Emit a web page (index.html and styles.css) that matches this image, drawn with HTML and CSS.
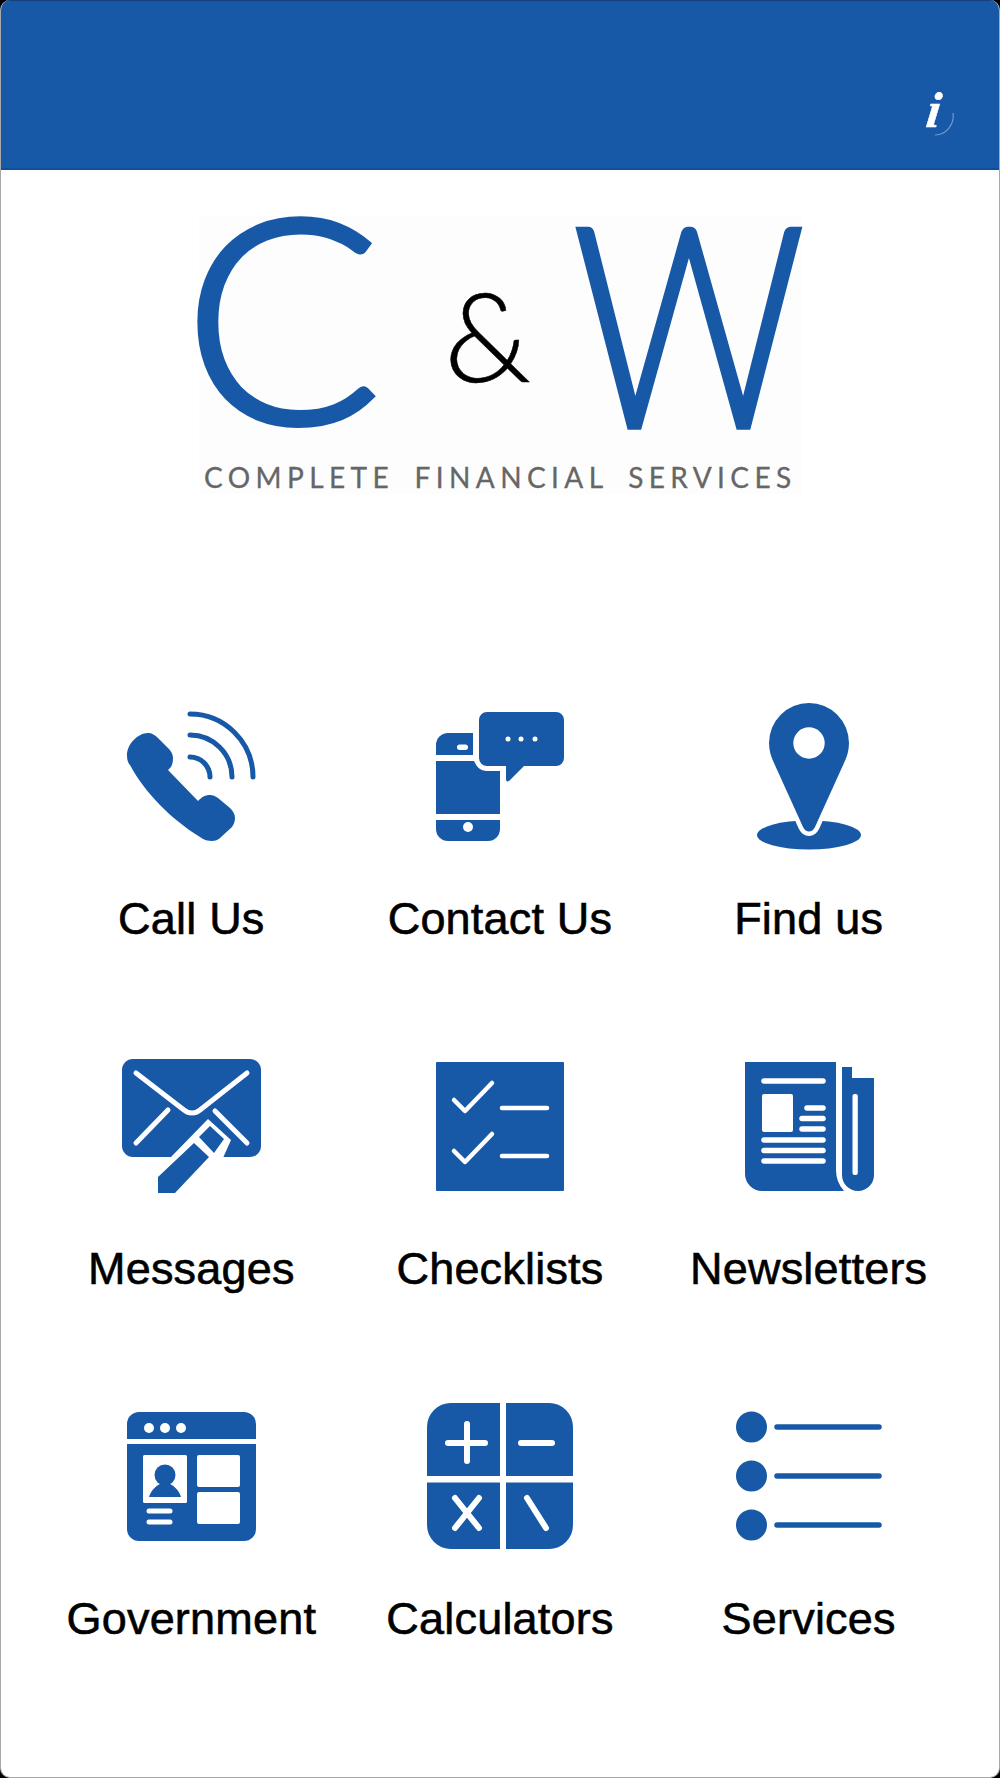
FILE: index.html
```html
<!DOCTYPE html>
<html lang="en">
<head>
    <meta charset="UTF-8">
    <title>C &amp; W Complete Financial Services</title>
    <link rel="stylesheet" href="styles.css">
</head>
<body>
<div class="screen">
    <header class="topbar">
        <svg class="info" width="44" height="50" viewBox="0 0 44 50">
            <path class="info-arc" d="M36 24 A19 19 0 0 1 18 46"/>
            <text class="info-i" transform="translate(8 38) skewX(-7)" x="0" y="0">i</text>
        </svg>
    </header>

    <svg class="logo" width="620" height="284" viewBox="0 0 620 284">
        <rect class="logo-bg" x="5" y="0" width="603" height="279"/>
        <text class="logo-big" transform="translate(-11 208) scale(1.03 1)" x="0" y="0">C</text>
        <text class="logo-amp" x="250" y="167">&amp;</text>
        <text class="logo-big" transform="translate(379 212) scale(0.8 0.98)" x="0" y="0">W</text>
        <text class="logo-tag" x="10" y="273">COMPLETE FINANCIAL SERVICES</text>
    </svg>

    <main class="menu">
        <a class="item">
            <svg class="icon" width="160" height="160" viewBox="0 0 160 160">
                <path class="ink" d="M37 33 C27 33 16 44 16 55 C16 60 17 63 19 65 C34 93 60 119 89 137 C93 140 97 141 101 141 C104 141 107 140 109 138 L121 127 C123 124 124 121 124 118 C124 114 122 111 119 108 L107 98 C104 96 102 95 99 95 C94 95 91 97 87 101 L57 70 C61 67 62 63 62 58 C62 54 60 51 57 48 L47 38 C44 35 41 33 37 33 Z"/>
                <path class="line-5" d="M79 14 A63 63 0 0 1 142 77"/>
                <path class="line-5" d="M79 35 A42 42 0 0 1 121 77"/>
                <path class="line-5" d="M79 57 A20 20 0 0 1 99 77"/>
            </svg>
            <span class="label">Call Us</span>
        </a>
        <a class="item">
            <svg class="icon" width="160" height="160" viewBox="0 0 160 160">
                <path class="ink" d="M16 55 V45 A12 12 0 0 1 28 33 H53 V55 Z"/>
                <rect class="white" x="37" y="44.500" width="11" height="5.500" rx="2.700"/>
                <path class="ink" d="M16 61 H54 C57 67 60 71 67 71 H80 V114 H16 Z"/>
                <path class="ink" d="M16 120 H80 V129 A12 12 0 0 1 68 141 H28 A12 12 0 0 1 16 129 Z"/>
                <circle class="white" cx="48" cy="127" r="5"/>
                <path class="ink" d="M67 12 H136 A8 8 0 0 1 144 20 V58 A8 8 0 0 1 136 66 H104 L89 81 C87 82 86 81 86 79 V66 H67 A8 8 0 0 1 59 58 V20 A8 8 0 0 1 67 12 Z"/>
                <circle class="white" cx="88" cy="39" r="2.500"/>
                <circle class="white" cx="101" cy="39" r="2.500"/>
                <circle class="white" cx="115" cy="39" r="2.500"/>
            </svg>
            <span class="label">Contact Us</span>
        </a>
        <a class="item">
            <svg class="icon" width="160" height="160" viewBox="0 0 160 160">
                <ellipse class="ink" cx="80" cy="135" rx="52" ry="14.500"/>
                <path class="ink pin" d="M80 3 A40 40 0 0 1 120 43 C120 50 118 57 115 63 L86 127 C83 133 77 133 74 127 L45 63 C42 57 40 50 40 43 A40 40 0 0 1 80 3 Z"/>
                <circle class="white" cx="80" cy="43" r="15.700"/>
            </svg>
            <span class="label">Find us</span>
        </a>

        <a class="item">
            <svg class="icon" width="160" height="160" viewBox="0 0 160 160">
                <rect class="ink" x="11" y="9" width="139" height="98" rx="11"/>
                <path class="cut-5" d="M25 23 L73 60 C78 64 84 64 89 60 L136 23"/>
                <path class="cut-5" d="M57 60 L25 93"/>
                <path class="cut-5" d="M104 61 L136 93"/>
                <path class="white" d="M59 108 L97 69 L120 90 L112 108 Z"/>
                <path class="ink" d="M88 87 L99 76 L113 89 L103 103 Z"/>
                <path class="ink" d="M47 127 L83 93 L98 107 L64 143 H47 Z"/>
            </svg>
            <span class="label">Messages</span>
        </a>
        <a class="item">
            <svg class="icon" width="160" height="160" viewBox="0 0 160 160">
                <rect class="ink" x="16" y="12" width="128" height="129" rx="1"/>
                <path class="cut-45" d="M34 50 L45 61 L72 33"/>
                <path class="cut-45" d="M82 58 H127"/>
                <path class="cut-45" d="M34 101 L45 112 L72 84"/>
                <path class="cut-45" d="M82 106 H127"/>
            </svg>
            <span class="label">Checklists</span>
        </a>
        <a class="item">
            <svg class="icon" width="160" height="160" viewBox="0 0 160 160">
                <path class="ink" d="M16 12 H107 V120 Q107 132 115 141 H33 A17 17 0 0 1 16 124 Z"/>
                <path class="ink" d="M113 17 H123 V28 H145 V125 A16 16 0 0 1 113 125 Z"/>
                <rect class="white" x="123.500" y="44" width="5.300" height="81" rx="2"/>
                <rect class="white" x="33" y="44" width="31" height="38" rx="2"/>
                <path class="cut-55" d="M35 31 H94"/>
                <path class="cut-55" d="M78 58 H94"/>
                <path class="cut-55" d="M73 68.500 H94"/>
                <path class="cut-55" d="M73 79 H94"/>
                <path class="cut-55" d="M35 90 H94"/>
                <path class="cut-55" d="M35 100.500 H94"/>
                <path class="cut-55" d="M35 111 H94"/>
            </svg>
            <span class="label">Newsletters</span>
        </a>

        <a class="item">
            <svg class="icon" width="160" height="160" viewBox="0 0 160 160">
                <path class="ink" d="M16 39 V24 A12 12 0 0 1 28 12 H133 A12 12 0 0 1 145 24 V39 Z"/>
                <path class="ink" d="M16 44 H145 V129 A12 12 0 0 1 133 141 H28 A12 12 0 0 1 16 129 Z"/>
                <circle class="white" cx="38" cy="28" r="5"/>
                <circle class="white" cx="54" cy="28" r="5"/>
                <circle class="white" cx="70" cy="28" r="5"/>
                <rect class="white" x="32" y="55" width="44" height="48" rx="1.500"/>
                <circle class="ink" cx="54" cy="75" r="10.500"/>
                <path class="ink" d="M38 97 C40 90 46 84 54 82 C62 84 68 90 70 97 Z"/>
                <rect class="white" x="86" y="55" width="43" height="32" rx="2"/>
                <rect class="white" x="86" y="92" width="43" height="32" rx="2"/>
                <path class="cut-5" d="M38 111 H59"/>
                <path class="cut-5" d="M38 122 H59"/>
            </svg>
            <span class="label">Government</span>
        </a>
        <a class="item">
            <svg class="icon" width="160" height="160" viewBox="0 0 160 160">
                <rect class="ink" x="7" y="3" width="146" height="146" rx="24"/>
                <rect class="white" x="80" y="0" width="6" height="152"/>
                <rect class="white" x="4" y="76" width="152" height="6.500"/>
                <path class="cut-6" d="M28 43 H65 M47 24 V61"/>
                <path class="cut-6" d="M101 43 H132"/>
                <path class="cut-6" d="M35 98 L59 128 M59 98 L35 128"/>
                <path class="cut-6" d="M107 98 L126 128"/>
            </svg>
            <span class="label">Calculators</span>
        </a>
        <a class="item">
            <svg class="icon" width="160" height="160" viewBox="0 0 160 160">
                <circle class="ink" cx="22.500" cy="27" r="15.500"/>
                <circle class="ink" cx="22.500" cy="76" r="15.500"/>
                <circle class="ink" cx="22.500" cy="125" r="15.500"/>
                <path class="line-6" d="M48 27 H150"/>
                <path class="line-6" d="M48 76 H150"/>
                <path class="line-6" d="M48 125 H150"/>
            </svg>
            <span class="label">Services</span>
        </a>
    </main>
</div>
</body>
</html>
```

FILE: styles.css
```css
body {
    margin: 0;
    background: #000;
    font-family: "Liberation Sans", Arial, sans-serif;
}
.screen {
    box-sizing: border-box;
    height: 1778px;
    background: #fff;
    border: 1px solid #a8a8a8;
    border-top: 0;
    border-radius: 10px;
    overflow: hidden;
    display: flex;
    flex-direction: column;
    align-items: center;
}
.topbar {
    box-sizing: border-box;
    width: 100%;
    height: 170px;
    flex-shrink: 0;
    background: #1759a7;
    border-top: 1px solid #163f7c;
    border-bottom: 2px solid #0f4f9e;
    display: flex;
    justify-content: flex-end;
    align-items: flex-end;
    padding: 0 38px 29px 0;
}
.info {
    overflow: visible;
}
.info-i {
    font-family: "Liberation Serif", serif;
    font-style: italic;
    font-weight: bold;
    font-size: 50px;
    fill: #fff;
    stroke: #fff;
    stroke-width: 0.600px;
}
.info-arc {
    fill: none;
    stroke: #6f9ad0;
    stroke-width: 1.200;
}
.logo {
    display: block;
    flex-shrink: 0;
    overflow: visible;
    margin: 45px 0 0 7px;
}
.logo-bg {
    fill: #fdfdfd;
}
.logo-big {
    font-family: Lato, sans-serif;
    font-weight: 300;
    font-size: 285px;
    fill: #1759a7;
    stroke: #1759a7;
    stroke-width: 5.500px;
    stroke-linejoin: miter;
}
.logo-amp {
    font-family: Lato, sans-serif;
    font-weight: 300;
    font-size: 125px;
    fill: #000;
    stroke: #000;
    stroke-width: 0.500px;
}
.logo-tag {
    font-family: Lato, sans-serif;
    font-size: 28px;
    letter-spacing: 5.400px;
    word-spacing: 8px;
    fill: #666;
    stroke: #666;
    stroke-width: 0.300px;
}
.menu {
    width: 100%;
    margin-top: 201px;
    padding: 0 36px;
    box-sizing: border-box;
    display: grid;
    grid-template-columns: repeat(3, 1fr);
    grid-auto-rows: 350px;
}
.item {
    display: flex;
    flex-direction: column;
    align-items: center;
    gap: 33px;
}
.icon {
    display: block;
}
.label {
    font-size: 45px;
    line-height: 52px;
    letter-spacing: 0.200px;
    -webkit-text-stroke: 0.600px #000;
    color: #000;
    white-space: nowrap;
}
.ink {
    fill: #1759a7;
}
.white {
    fill: #fff;
}
.pin {
    stroke: #fff;
    stroke-width: 9px;
    paint-order: stroke;
}
.line-5, .line-6 {
    fill: none;
    stroke: #1759a7;
    stroke-linecap: round;
    stroke-width: 5px;
}
.line-6 {
    stroke-width: 5.500px;
}
.cut-45, .cut-5, .cut-55, .cut-6 {
    fill: none;
    stroke: #fff;
    stroke-linecap: round;
    stroke-linejoin: round;
    stroke-width: 4.500px;
}
.cut-5 {
    stroke-width: 5px;
}
.cut-55 {
    stroke-width: 5.500px;
}
.cut-6 {
    stroke-width: 6px;
}
```
